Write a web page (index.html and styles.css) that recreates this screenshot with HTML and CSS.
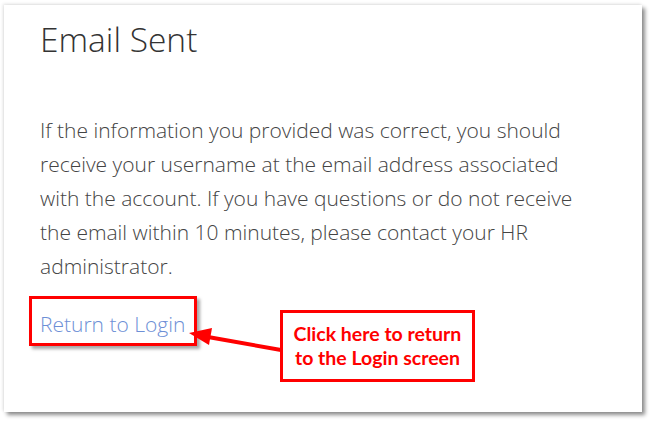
FILE: index.html
```html
<!DOCTYPE html>
<html lang="en">
<head>
  <meta charset="UTF-8">
  <title>Email Sent</title>
  <link rel="stylesheet" href="styles.css">
</head>
<body>

  <!-- Email Sent Panel -->
  <div class="panel">
    <h1 class="title">Email Sent</h1>
    <p class="message">If the information you provided was correct, you should receive your username at the email address associated with the account. If you have questions or do not receive the email within 10 minutes, please contact your HR administrator.</p>
    <a class="login-link" href="#">Return to Login</a>
  </div>

  <!-- Annotation layer -->
  <div class="highlight"></div>
  <svg class="arrow" width="651" height="421" viewBox="0 0 651 421">
    <line x1="281" y1="350" x2="208" y2="337" stroke="#ff0000" stroke-width="4"/>
    <polygon points="189,333 212,328 209,345" fill="#ff0000"/>
  </svg>
  <div class="callout">Click here to return<br>to the Login screen</div>

</body>
</html>
```

FILE: styles.css
```css
/* General Styles */
* {
  padding: 0;
  margin: 0;
  box-sizing: border-box;
}

body {
  font-family: 'Open Sans', sans-serif;
  background: #fff;
  width: 651px;
  height: 421px;
  overflow: hidden;
  position: relative;
}

.panel {
  margin: 5px 0 0 4px;
  width: 638px;
  height: 407px;
  background: #fff;
  padding: 14px 0 0 36px;
  box-shadow: 3px 3px 4px rgba(0, 0, 0, 0.45), -1px -1px 3px rgba(0, 0, 0, 0.12);
}

.title {
  font-size: 33.5px;
  font-weight: 300;
  line-height: 40px;
  color: #333;
}

.message {
  margin-top: 54px;
  width: 560px;
  font-size: 21px;
  font-weight: 300;
  line-height: 34px;
  color: #444;
}

.login-link {
  display: inline-block;
  margin-top: 24px;
  font-size: 21px;
  font-weight: 300;
  line-height: 34px;
  color: #6d8fd6;
  text-decoration: none;
}

/* Annotation Styles */
.highlight {
  position: absolute;
  left: 29px;
  top: 296px;
  width: 168px;
  height: 50px;
  border: 3px solid #ff0000;
  box-shadow: 3px 3px 3px rgba(0, 0, 0, 0.35);
}

.arrow {
  position: absolute;
  left: 0;
  top: 0;
}

.callout {
  position: absolute;
  left: 280px;
  top: 310px;
  width: 195px;
  height: 72px;
  border: 3px solid #ff0000;
  background: #fff;
  color: #ff0000;
  font-family: 'Lato', sans-serif;
  font-weight: 700;
  font-size: 19.5px;
  line-height: 24px;
  text-align: center;
  padding-top: 9px;
}
```
